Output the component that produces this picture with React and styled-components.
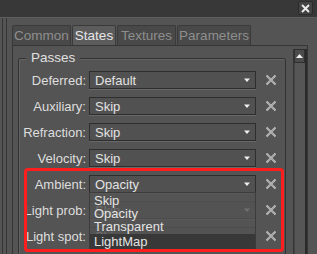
import React from 'react';
import styled, {createGlobalStyle} from 'styled-components';

const Global = createGlobalStyle`
    body{
        margin:0;
        background:#545454;
        font-family:"Liberation Sans", Arial, sans-serif;
    }
`;

const Window = styled.div`
    width:317px;
    height:254px;
    background:#545454;
    display:flex;
    flex-direction:column;
    overflow:hidden;
    font-size:13px;
    color:#dedede;
`;

const TitleBar = styled.div`
    height:18px;
    flex:none;
    background:#383838;
    border-bottom:1px solid #5e5e5e;
    display:flex;
    justify-content:flex-end;
    align-items:flex-start;
    padding:1px 4px 0 0;
    box-sizing:border-box;
`;

const CloseBtn = styled.div`
    width:15px;
    height:14px;
    box-sizing:border-box;
    background:#444;
    border:1px solid #2c2c2c;
    border-radius:2px;
    display:flex;
    align-items:center;
    justify-content:center;
`;

const Body = styled.div`
    flex:1;
    display:flex;
    min-height:0;
`;

const Rail = styled.div`
    width:3px;
    margin-left:2px;
    border-left:1px solid #363636;
    border-right:1px solid #363636;
    flex:none;
`;

const Content = styled.div`
    margin-left:5px;
    padding-top:7px;
    width:296px;
    display:flex;
    flex-direction:column;
    min-height:0;
`;

const TabBar = styled.div`
    display:flex;
    gap:1px;
    height:20px;
    flex:none;
`;

const Tab = styled.div`
    width:${p=>p.w}px;
    box-sizing:border-box;
    background:${p=>p.active?'#5c5c5c':'#494949'};
    color:${p=>p.active?'#e6e6e6':'#8e8e8e'};
    border:1px solid #3a3a3a;
    border-bottom:none;
    border-radius:2px 2px 0 0;
    display:flex;
    align-items:center;
    justify-content:center;
    font-size:13.5px;
`;

const Panel = styled.div`
    flex:1;
    min-height:0;
    overflow:hidden;
    border:1px solid #363636;
    border-bottom:none;
    display:flex;
    align-items:flex-start;
    padding:2px 0 0 5px;
    gap:7px;
`;

const GroupBox = styled.div`
    margin-top:10px;
    width:268px;
    flex:none;
    box-sizing:border-box;
    border:1px solid #333;
    box-shadow:inset 1px 1px 0 #626262;
    border-radius:2px;
    display:flex;
    flex-direction:column;
    padding-bottom:20px;
`;

const GroupTitle = styled.div`
    align-self:flex-start;
    margin:-9px 0 0 7px;
    padding:0 5px;
    line-height:16px;
    background:#545454;
    font-size:13.5px;
    color:#e0e0e0;
`;

const Rows = styled.div`
    margin-top:5px;
    display:flex;
    flex-direction:column;
    gap:8px;
`;

const Highlight = styled.div`
    position:relative;
    display:flex;
    flex-direction:column;
    gap:8px;
    &::after{
        content:'';
        position:absolute;
        top:-7px;
        bottom:-7px;
        left:5px;
        right:1px;
        border:3px solid #ff1e1e;
        border-radius:4px;
        pointer-events:none;
        z-index:5;
    }
`;

const Row = styled.div`
    display:flex;
    align-items:center;
    height:18px;
    flex:none;
`;

const Label = styled.div`
    width:67px;
    text-align:right;
    white-space:nowrap;
    margin-right:3px;
`;

const Combo = styled.div`
    position:relative;
    width:167px;
    height:18px;
    box-sizing:border-box;
    border:1px solid #2e2e2e;
    box-shadow:0 1px 0 #686868;
    background:#515151;
    display:flex;
    align-items:center;
    padding:0 0 0 5px;
    color:#e2e2e2;
`;

const ComboText = styled.span`
    flex:1;
`;

const Arrow = styled.svg`
    margin-right:5px;
`;

const Remove = styled.svg`
    margin-left:9px;
`;

const Popup = styled.div`
    position:absolute;
    top:100%;
    left:-1px;
    width:167px;
    box-sizing:border-box;
    background:rgba(84,84,84,0.82);
    border:1px solid #3c3c3c;
    z-index:4;
    display:flex;
    flex-direction:column;
    padding-top:1px;
`;

const Item = styled.div`
    height:13px;
    line-height:13px;
    padding-left:4px;
    background:${p=>p.selected?'#383838':'transparent'};
    color:#e4e4e4;
    ${p=>p.selected && 'height:15px;line-height:15px;margin-top:1px;'}
`;

const ScrollBar = styled.div`
    width:13px;
    height:100%;
    border-left:1px solid #353535;
    border-right:2px solid #2a2a2a;
    display:flex;
    flex-direction:column;
    margin-top:1px;
`;

const ScrollUp = styled.div`
    height:14px;
    flex:none;
    box-sizing:border-box;
    border:1px solid #2f2f2f;
    background:#4c4c4c;
    display:flex;
    align-items:center;
    justify-content:center;
`;

const Trough = styled.div`
    flex:1;
    background:#565656;
    border-left:1px solid #444;
`;

const DownArrow = () => (
    <Arrow width="6" height="4" viewBox="0 0 6 4">
        <path d="M0 0.5h6L3 4z" fill="#f0f0f0"/>
    </Arrow>
);

// checkered grey cross, like the reference's remove button
const XIcon = () => (
    <Remove width="12" height="12" viewBox="0 0 12 12">
        <path d="M1.5 1.5l9 9M10.5 1.5l-9 9" stroke="#bdbdbd" strokeWidth="2"/>
        <path d="M1.5 1.5l9 9M10.5 1.5l-9 9" stroke="#858585" strokeWidth="0.8" strokeDasharray="1 1"/>
    </Remove>
);

const tabs = [
    {name:'Common', w:59},
    {name:'States', w:44, active:true},
    {name:'Textures', w:59},
    {name:'Parameters', w:74}
];

const passes = [
    ['Deferred:', 'Default'],
    ['Auxiliary:', 'Skip'],
    ['Refraction:', 'Skip'],
    ['Velocity:', 'Skip']
];

const options = ['Skip', 'Opacity', 'Transparent', 'LightMap'];

const PassRow = ({label, value, children}) => (
    <Row>
        <Label>{label}</Label>
        <Combo>
            <ComboText>{value}</ComboText>
            <DownArrow/>
            {children}
        </Combo>
        <XIcon/>
    </Row>
);

export default function App(){
    return(
        <Window>
            <Global/>
            <TitleBar>
                <CloseBtn>
                    <svg width="9" height="9" viewBox="0 0 9 9">
                        <path d="M1 1l7 7M8 1l-7 7" stroke="#eee" strokeWidth="1.8"/>
                    </svg>
                </CloseBtn>
            </TitleBar>
            <Body>
                <Rail/>
                <Content>
                    <TabBar>
                        {tabs.map(t=>(
                            <Tab key={t.name} w={t.w} active={t.active}>{t.name}</Tab>
                        ))}
                    </TabBar>
                    <Panel>
                        <GroupBox>
                            <GroupTitle>Passes</GroupTitle>
                            <Rows>
                                {passes.map(([l,v])=>(
                                    <PassRow key={l} label={l} value={v}/>
                                ))}
                                <Highlight>
                                    <PassRow label="Ambient:" value="Opacity">
                                        <Popup>
                                            {options.map(o=>(
                                                <Item key={o} selected={o==='LightMap'}>{o}</Item>
                                            ))}
                                        </Popup>
                                    </PassRow>
                                    <PassRow label="Light prob:" value="Skip"/>
                                    <PassRow label="Light spot:" value="Skip"/>
                                </Highlight>
                            </Rows>
                        </GroupBox>
                        <ScrollBar>
                            <ScrollUp>
                                <svg width="7" height="4" viewBox="0 0 7 4">
                                    <path d="M0 4h7L3.5 0z" fill="#f0f0f0"/>
                                </svg>
                            </ScrollUp>
                            <Trough/>
                        </ScrollBar>
                    </Panel>
                </Content>
            </Body>
        </Window>
    );
}
